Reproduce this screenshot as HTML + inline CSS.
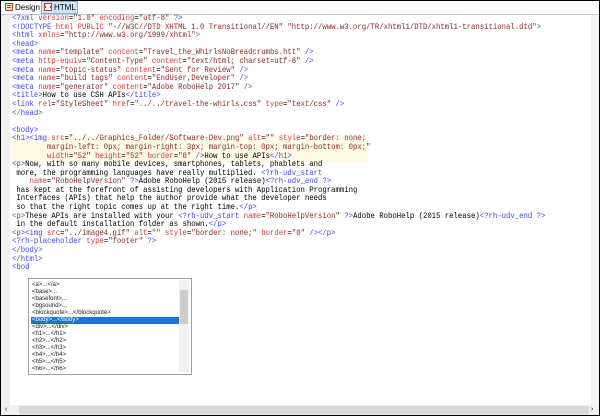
<!DOCTYPE html>
<html><head><style>
body{margin:0;width:600px;height:416px;overflow:hidden;background:#fff;font-family:"Liberation Sans",sans-serif}
#f{position:absolute;left:0;top:0;width:598px;height:414px;border:1px solid #000;overflow:hidden;background:#fff}
#tb{position:absolute;left:0;top:0;width:598px;height:13px;background:#fff;border-bottom:1px solid #c8c8d4}
.tab{position:absolute;top:1px;height:11px;font-size:8px;line-height:11px;padding-left:12px}
.ic{position:absolute;left:2px;top:1px;width:8px;height:8px}
#gut{position:absolute;left:0;top:14px;width:9px;height:390px;background:#f0f0f0}
#code{position:absolute;left:11px;top:14px;font-family:"Liberation Mono",monospace;font-size:8.1px;line-height:8.6px;white-space:pre;color:#000;transform:scaleX(0.9);transform-origin:0 0}
.t{color:#4646e6}.a{color:#d23c3c}.v{color:#8b2a2a}
#hl{position:absolute;left:10px;top:136px;width:357px;height:26px;background:#fffbe6}
#vs{position:absolute;left:590px;top:14px;width:8px;height:390px;background:#f4f4f4}
#hs{position:absolute;left:0;top:404px;width:598px;height:10px;background:#f0f0f0}
#hs .th{position:absolute;left:18px;top:1px;width:570px;height:8px;background:#dadada}
#dd{position:absolute;left:27px;top:277px;width:162px;height:95px;border:1px solid #a0a0a0;background:#fff}
#dd .it{position:absolute;left:2px;width:147px;height:7px;font-size:6px;line-height:7px;color:#222;white-space:pre;padding-left:1px}
#dd .sel{background:#1a73d6;color:#fff}
#sb{position:absolute;left:150px;top:1px;width:10px;height:92px;background:#f0f0f0}
#sb .th{position:absolute;left:1px;top:10px;width:8px;height:34px;background:#cdcdcd}
</style></head><body><div id="f">
<div id="tb">
<div class="tab" style="left:2px;width:24px;color:#000"><svg class="ic" viewBox="0 0 8 8"><rect x="0.5" y="0.5" width="7" height="7" fill="#f8e0d0" stroke="#c04020"/><rect x="2" y="2" width="4" height="1" fill="#c04020"/><rect x="2" y="4" width="4" height="1" fill="#c04020"/></svg>Design</div>
<div class="tab" style="left:40px;width:23px;background:#cde6f7;border:1px solid #7eb4ea;top:0;color:#000"><svg class="ic" viewBox="0 0 8 8"><rect x="0.5" y="0.5" width="7" height="7" fill="#fff" stroke="#c04020"/><path d="M2 3 L1 4 L2 5 M6 3 L7 4 L6 5" stroke="#c04020" fill="none"/></svg>HTML</div>
</div>
<div id="gut"></div>
<div id="hl"></div>
<div id="code"><span class="t">&lt;?xml</span> <span class="a">version</span>=<span class="v">"1.0"</span> <span class="a">encoding</span>=<span class="v">"utf-8"</span> <span class="t">?&gt;</span>
<span class="t">&lt;!DOCTYPE</span> <span class="a">html</span> <span class="a">PUBLIC</span> <span class="v">"-//W3C//DTD XHTML 1.0 Transitional//EN" "http://www.w3.org/TR/xhtml1/DTD/xhtml1-transitional.dtd"</span><span class="t">&gt;</span>
<span class="t">&lt;html</span> <span class="a">xmlns</span>=<span class="v">"http://www.w3.org/1999/xhtml"</span><span class="t">&gt;</span>
<span class="t">&lt;head&gt;</span>
<span class="t">&lt;meta</span> <span class="a">name</span>=<span class="v">"template"</span> <span class="a">content</span>=<span class="v">"Travel_the_WhirlsNoBreadcrumbs.htt"</span> <span class="t">/&gt;</span>
<span class="t">&lt;meta</span> <span class="a">http-equiv</span>=<span class="v">"Content-Type"</span> <span class="a">content</span>=<span class="v">"text/html; charset=utf-8"</span> <span class="t">/&gt;</span>
<span class="t">&lt;meta</span> <span class="a">name</span>=<span class="v">"topic-status"</span> <span class="a">content</span>=<span class="v">"Sent for Review"</span> <span class="t">/&gt;</span>
<span class="t">&lt;meta</span> <span class="a">name</span>=<span class="v">"build tags"</span> <span class="a">content</span>=<span class="v">"EndUser,Developer"</span> <span class="t">/&gt;</span>
<span class="t">&lt;meta</span> <span class="a">name</span>=<span class="v">"generator"</span> <span class="a">content</span>=<span class="v">"Adobe RoboHelp 2017"</span> <span class="t">/&gt;</span>
<span class="t">&lt;title&gt;</span>How to use CSH APIs<span class="t">&lt;/title&gt;</span>
<span class="t">&lt;link</span> <span class="a">rel</span>=<span class="v">"StyleSheet"</span> <span class="a">href</span>=<span class="v">"../../travel-the-whirls.css"</span> <span class="a">type</span>=<span class="v">"text/css"</span> <span class="t">/&gt;</span>
<span class="t">&lt;/head&gt;</span>

<span class="t">&lt;body&gt;</span>
<span class="t">&lt;h1&gt;&lt;img</span> <span class="a">src</span>=<span class="v">"../../Graphics_Folder/Software-Dev.png"</span> <span class="a">alt</span>=<span class="v">""</span> <span class="a">style</span>=<span class="v">"border: none;</span>
<span class="v">        margin-left: 0px; margin-right: 3px; margin-top: 0px; margin-bottom: 0px;"</span>
        <span class="a">width</span>=<span class="v">"52"</span> <span class="a">height</span>=<span class="v">"52"</span> <span class="a">border</span>=<span class="v">"0"</span> <span class="t">/&gt;</span>How to use APIs<span class="t">&lt;/h1&gt;</span>
<span class="t">&lt;p&gt;</span>Now, with so many mobile devices, smartphones, tablets, phablets and
 more, the programming languages have really multiplied. <span class="t">&lt;?rh-udv_start</span>
    <span class="a">name</span>=<span class="v">"RoboHelpVersion"</span> <span class="t">?&gt;</span>Adobe RoboHelp (2015 release)<span class="t">&lt;?rh-udv_end ?&gt;</span>
 has kept at the forefront of assisting developers with Application Programming
 Interfaces (APIs) that help the author provide what the developer needs
 so that the right topic comes up at the right time.<span class="t">&lt;/p&gt;</span>
<span class="t">&lt;p&gt;</span>These APIs are installed with your <span class="t">&lt;?rh-udv_start</span> <span class="a">name</span>=<span class="v">"RoboHelpVersion"</span> <span class="t">?&gt;</span>Adobe RoboHelp (2015 release)<span class="t">&lt;?rh-udv_end ?&gt;</span>
 in the default installation folder as shown.<span class="t">&lt;/p&gt;</span>
<span class="t">&lt;p&gt;&lt;img</span> <span class="a">src</span>=<span class="v">"../image4.gif"</span> <span class="a">alt</span>=<span class="v">""</span> <span class="a">style</span>=<span class="v">"border: none;"</span> <span class="a">border</span>=<span class="v">"0"</span> <span class="t">/&gt;&lt;/p&gt;</span>
<span class="t">&lt;?rh-placeholder</span> <span class="a">type</span>=<span class="v">"footer"</span> <span class="t">?&gt;</span>
<span class="t">&lt;/body&gt;</span>
<span class="t">&lt;/html&gt;</span>
<span class="t">&lt;bod</span></div>
<div id="vs"></div>
<div id="hs"><div class="th"></div><span style="position:absolute;left:4px;top:0;font-size:7px;line-height:10px">&lsaquo;</span><span style="position:absolute;left:590px;top:0;font-size:7px;line-height:10px">&rsaquo;</span></div>
<div id="dd">
<div class="it" style="top:3px">&lt;a&gt;...&lt;/a&gt;</div>
<div class="it" style="top:10px">&lt;base&gt;...</div>
<div class="it" style="top:17px">&lt;basefont&gt;...</div>
<div class="it" style="top:24px">&lt;bgsound&gt;...</div>
<div class="it" style="top:31px">&lt;blockquote&gt;...&lt;/blockquote&gt;</div>
<div class="it sel" style="top:38px">&lt;body&gt;...&lt;/body&gt;</div>
<div class="it" style="top:45px">&lt;div&gt;...&lt;/div&gt;</div>
<div class="it" style="top:52px">&lt;h1&gt;...&lt;/h1&gt;</div>
<div class="it" style="top:59px">&lt;h2&gt;...&lt;/h2&gt;</div>
<div class="it" style="top:66px">&lt;h3&gt;...&lt;/h3&gt;</div>
<div class="it" style="top:73px">&lt;h4&gt;...&lt;/h4&gt;</div>
<div class="it" style="top:80px">&lt;h5&gt;...&lt;/h5&gt;</div>
<div class="it" style="top:87px;height:6px;overflow:hidden">&lt;h6&gt;...&lt;/h6&gt;</div>
<div id="sb"><div class="th"></div></div>
</div>
</div></body></html>
